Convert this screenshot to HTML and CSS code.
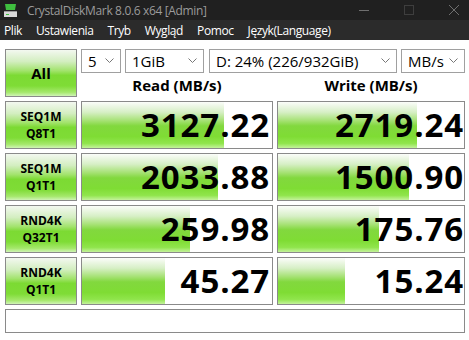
FILE: index.html
```html
<!DOCTYPE html>
<html lang="pl">
    <head>
        <meta charset="utf-8">
        <title>CrystalDiskMark 8.0.6 x64 [Admin]</title>
        <link rel="stylesheet" href="styles.css">
    </head>
    <body>
        <div class="titlebar">
            <svg class="app-icon" width="15" height="15" viewBox="0 0 15 15">
                <path d="M2 1 H13 L12 7 H3 Z" fill="#3fbf3f"/>
                <rect x="1" y="8" width="13" height="6" fill="#d8d8d8"/>
                <rect x="1" y="8" width="13" height="1" fill="#9a9a9a"/>
                <rect x="3" y="11" width="3" height="1" fill="#3fbf3f"/>
            </svg>
            <span class="title">CrystalDiskMark 8.0.6 x64 [Admin]</span>
            <div class="winctl">
                <svg width="10" height="10" viewBox="0 0 10 10"><path d="M0 5.5 H10" stroke="#6f6f6f"/></svg>
                <svg width="10" height="10" viewBox="0 0 10 10"><rect x="0.5" y="0.5" width="9" height="9" fill="none" stroke="#3e3e3e"/></svg>
                <svg width="10" height="10" viewBox="0 0 10 10"><path d="M0 0 L10 10 M10 0 L0 10" stroke="#6f6f6f"/></svg>
            </div>
        </div>
        <div class="menubar">
            <span>Plik</span>
            <span>Ustawienia</span>
            <span>Tryb</span>
            <span>Wygląd</span>
            <span>Pomoc</span>
            <span>Język(Language)</span>
        </div>

        <div class="main">
            <div class="btn all">All</div>
            <div class="head">
                <div class="combos">
                    <div class="combo c-count">5<svg width="9" height="5" viewBox="0 0 9 5"><path d="M0.5 0.5 L4.5 4.5 L8.5 0.5" fill="none" stroke="#777"/></svg></div>
                    <div class="combo c-size">1GiB<svg width="9" height="5" viewBox="0 0 9 5"><path d="M0.5 0.5 L4.5 4.5 L8.5 0.5" fill="none" stroke="#777"/></svg></div>
                    <div class="combo c-drive">D: 24% (226/932GiB)<svg width="9" height="5" viewBox="0 0 9 5"><path d="M0.5 0.5 L4.5 4.5 L8.5 0.5" fill="none" stroke="#777"/></svg></div>
                    <div class="combo c-unit">MB/s<svg width="9" height="5" viewBox="0 0 9 5"><path d="M0.5 0.5 L4.5 4.5 L8.5 0.5" fill="none" stroke="#777"/></svg></div>
                </div>
                <div class="colheads">
                    <div class="colhead read">Read (MB/s)</div>
                    <div class="colhead write">Write (MB/s)</div>
                </div>
            </div>

            <div class="btn label">SEQ1M<br>Q8T1</div>
            <div class="cell read"><div class="bar" style="width: 142px"></div><span class="val">3127.22</span></div>
            <div class="cell write"><div class="bar" style="width: 139px"></div><span class="val">2719.24</span></div>

            <div class="btn label">SEQ1M<br>Q1T1</div>
            <div class="cell read"><div class="bar" style="width: 136px"></div><span class="val">2033.88</span></div>
            <div class="cell write"><div class="bar" style="width: 131px"></div><span class="val">1500.90</span></div>

            <div class="btn label">RND4K<br>Q32T1</div>
            <div class="cell read"><div class="bar" style="width: 108px"></div><span class="val">259.98</span></div>
            <div class="cell write"><div class="bar" style="width: 101px"></div><span class="val">175.76</span></div>

            <div class="btn label">RND4K<br>Q1T1</div>
            <div class="cell read"><div class="bar" style="width: 83px"></div><span class="val">45.27</span></div>
            <div class="cell write"><div class="bar" style="width: 67px"></div><span class="val">15.24</span></div>

            <div class="status"></div>
        </div>
    </body>
</html>
```

FILE: styles.css
```css
body {
    margin: 0;
    background: #ffffff;
    font-family: "Open Sans", "Noto Sans", sans-serif;
    color: #000;
    width: 469px;
    height: 340px;
    overflow: hidden;
}
.titlebar {
    height: 20px;
    background: #202020;
    display: flex;
    align-items: center;
}
.app-icon {
    margin-left: 3px;
}
.title {
    margin-left: 9px;
    font-size: 12px;
    color: #9b9b9b;
    letter-spacing: -0.35px;
}
.winctl {
    margin-left: auto;
    display: flex;
    gap: 35px;
    padding-right: 10px;
}
.menubar {
    height: 20px;
    background: #2b2b2b;
    display: flex;
    align-items: center;
    padding-left: 4px;
    gap: 14px;
    font-size: 12px;
    letter-spacing: -0.4px;
    color: #ffffff;
}
.main {
    display: grid;
    grid-template-columns: 72px 192px 188px;
    grid-template-rows: 48px repeat(4, 48px) 24px;
    column-gap: 4px;
    row-gap: 4px;
    padding: 9px 0 0 5px;
}
.btn {
    box-sizing: border-box;
    border: 1px solid #8a8a8a;
    background: linear-gradient(to bottom, #f3f8f0 0%, #d3eec0 25%, #a2e36c 45%, #7cda33 55%, #7fdc36 78%, #a5e86c 92%, #d0f4b6 100%);
    font-weight: bold;
    text-align: center;
    display: flex;
    align-items: center;
    justify-content: center;
}
.all {
    font-size: 15px;
}
.label {
    font-size: 12px;
    line-height: 17px;
    padding-bottom: 1px;
}
.head {
    grid-column: 2 / 4;
    display: flex;
    flex-direction: column;
}
.combos {
    display: flex;
    height: 24px;
}
.combo {
    box-sizing: border-box;
    height: 24px;
    border: 1px solid #a0a0a0;
    background: #fff;
    font-size: 15px;
    display: flex;
    align-items: center;
    justify-content: space-between;
    padding: 0 6px 1px 6px;
}
.c-count { width: 40px; }
.c-size { width: 79px; margin-left: 4px; }
.c-drive { width: 188px; margin-left: 5px; }
.c-unit { width: 64px; margin-left: 4px; }
.colheads {
    display: flex;
    flex: 1;
    gap: 4px;
}
.colhead {
    font-size: 15px;
    font-weight: bold;
    text-align: center;
    line-height: 24px;
}
.colhead.read { width: 192px; }
.colhead.write { width: 188px; }
.cell {
    position: relative;
    box-sizing: border-box;
    border: 1px solid #8a8a8a;
    background: #fff;
    display: flex;
    align-items: center;
    justify-content: flex-end;
    padding-right: 3px;
}
.cell.write {
    padding-right: 1px;
}
.bar {
    position: absolute;
    left: 0;
    top: 0;
    bottom: 0;
    background: linear-gradient(to bottom, #fbfdfa 0%, #d7efc6 22%, #a7e276 40%, #82d83e 52%, #7fdc34 75%, #90e54c 90%, #c4f29c 100%);
}
.val {
    position: relative;
    font-size: 33px;
    font-weight: bold;
    letter-spacing: 0.9px;
    line-height: 1;
    padding-bottom: 2px;
    margin-right: -1px;
}
.status {
    grid-column: 1 / 4;
    box-sizing: border-box;
    border: 1px solid #8a8a8a;
    background: #fff;
}
```
